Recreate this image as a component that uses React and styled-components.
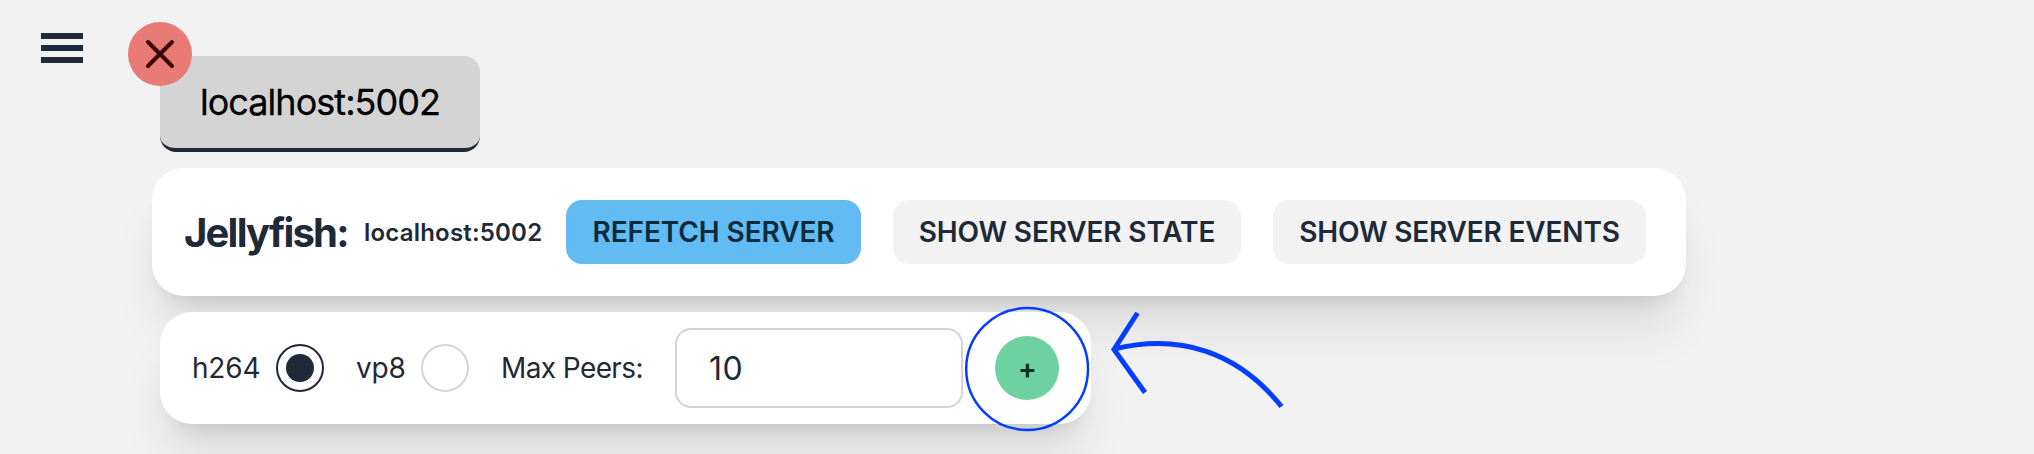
import React from "react";
import styled, { createGlobalStyle } from "styled-components";

const GlobalStyle = createGlobalStyle`
  *, *::before, *::after { box-sizing: border-box; }
  body {
    margin: 0;
    background: #f2f2f2;
    color: #1f2937;
    font-family: Inter, "Liberation Sans", sans-serif;
    overflow: hidden;
  }
`;

const Page = styled.div`
  display: flex;
  width: 2034px;
  height: 454px;
  overflow: hidden;
`;

const Sidebar = styled.aside`
  width: 152px;
  flex: none;
  padding: 33px 0 0 41px;
`;

const MenuButton = styled.button`
  display: flex;
  flex-direction: column;
  gap: 6px;
  width: 42px;
  padding: 0;
  border: 0;
  background: none;
`;

const MenuBar = styled.span`
  height: 6px;
  background: #1f2937;
`;

const Main = styled.main`
  display: flex;
  flex-direction: column;
  align-items: flex-start;
  padding-top: 56px;
`;

const Tab = styled.div`
  position: relative;
  display: flex;
  align-items: center;
  justify-content: center;
  width: 320px;
  height: 96px;
  margin: 0 0 16px 8px;
  border-bottom: 4px solid #1f2937;
  border-radius: 16px;
  background: #d4d4d4;
  color: #000;
  font-size: 36px;
  letter-spacing: -0.95px;
  -webkit-text-stroke: 0.3px #000;
`;

const CloseBadge = styled.button`
  position: absolute;
  top: -34px;
  left: -32px;
  display: grid;
  place-items: center;
  width: 64px;
  height: 64px;
  padding: 0;
  border: 0;
  border-radius: 50%;
  background: #e87b76;
`;

const Card = styled.section`
  display: flex;
  align-items: center;
  border-radius: 32px;
  background: #fff;
  box-shadow: 0 40px 50px -10px rgba(0, 0, 0, 0.1), 0 16px 20px -12px rgba(0, 0, 0, 0.1);
`;

const ServerCard = styled(Card)`
  width: 1534px;
  height: 128px;
  padding: 0 40px 0 32px;
`;

const RoomCard = styled(Card)`
  width: 931px;
  height: 112px;
  margin: 16px 0 0 8px;
  padding: 0 32px;
`;

const Title = styled.h1`
  width: 180px;
  margin: 0;
  font-size: 40px;
  font-weight: 700;
  letter-spacing: -1.8px;
  white-space: nowrap;
`;

const Host = styled.span`
  width: 202px;
  font-size: 24px;
  font-weight: 600;
  letter-spacing: 0.2px;
  white-space: nowrap;
`;

const Actions = styled.div`
  display: flex;
  gap: 32px;
`;

const Button = styled.button`
  width: ${(p) => p.$width}px;
  height: 64px;
  padding: 0;
  border: 0;
  border-radius: 16px;
  background: ${(p) => (p.$info ? "#62bcf3" : "#f2f2f2")};
  color: ${(p) => (p.$info ? "#0b2b3b" : "#1f2937")};
  font: 600 28px Inter, "Liberation Sans", sans-serif;
  letter-spacing: ${(p) => p.$tracking}px;
  white-space: nowrap;
`;

const Label = styled.label`
  width: ${(p) => p.$width}px;
  font-size: 28px;
  letter-spacing: ${(p) => p.$tracking}px;
  white-space: nowrap;
`;

const Radio = styled.span`
  display: grid;
  place-items: center;
  width: 48px;
  height: 48px;
  margin-right: 32px;
  border: 2px solid ${(p) => (p.$checked ? "#1f2937" : "#d2d4d7")};
  border-radius: 50%;

  &::after {
    content: "";
    width: 28px;
    height: 28px;
    border-radius: 50%;
    background: ${(p) => (p.$checked ? "#1f2937" : "transparent")};
  }
`;

const PeersInput = styled.input`
  width: 288px;
  height: 80px;
  padding: 0 32px;
  border: 2px solid #d2d4d7;
  border-radius: 16px;
  background: #fff;
  color: #1f2937;
  font: 400 32px Inter, "Liberation Sans", sans-serif;
  letter-spacing: 0.4px;
  outline: none;
`;

const AddButton = styled.button`
  width: 64px;
  height: 64px;
  margin-left: 32px;
  padding: 1px 0 0 1px;
  border: 0;
  border-radius: 50%;
  background: #6dd1a0;
  color: #10301f;
  font: 600 28px Inter, "Liberation Sans", sans-serif;
`;

const Annotation = styled.svg`
  position: absolute;
  top: 300px;
  left: 960px;
  pointer-events: none;
`;

export default function App() {
  return (
    <Page>
      <GlobalStyle />
      <Sidebar>
        <MenuButton aria-label="Menu">
          <MenuBar />
          <MenuBar />
          <MenuBar />
        </MenuButton>
      </Sidebar>
      <Main>
        <Tab>
          localhost:5002
          <CloseBadge aria-label="Close">
            <svg width="32" height="32" viewBox="0 0 32 32" fill="none" stroke="#3b0505" strokeWidth="4" strokeLinecap="round">
              <path d="M4 4L28 28M28 4L4 28" />
            </svg>
          </CloseBadge>
        </Tab>
        <ServerCard>
          <Title>Jellyfish:</Title>
          <Host>localhost:5002</Host>
          <Actions>
            <Button $info $width={295} $tracking={-0.1}>REFETCH SERVER</Button>
            <Button $width={348} $tracking={-0.15}>SHOW SERVER STATE</Button>
            <Button $width={373} $tracking={-0.17}>SHOW SERVER EVENTS</Button>
          </Actions>
        </ServerCard>
        <RoomCard>
          <Label $width={84} $tracking={-0.2}>h264</Label>
          <Radio $checked />
          <Label $width={65} $tracking={-0.2}>vp8</Label>
          <Radio />
          <Label $width={174} $tracking={-0.6}>Max Peers:</Label>
          <PeersInput defaultValue="10" />
          <AddButton>+</AddButton>
        </RoomCard>
      </Main>
      <Annotation width="330" height="140" viewBox="960 300 330 140" fill="none" stroke="#033dff">
        <circle cx="1027.1" cy="369" r="60.9" strokeWidth="2.5" />
        <path d="M1137.5 313L1114 349.5L1145 392.5M1114 349C1180 333 1238 352 1281.5 406.5" strokeWidth="5" />
      </Annotation>
    </Page>
  );
}
